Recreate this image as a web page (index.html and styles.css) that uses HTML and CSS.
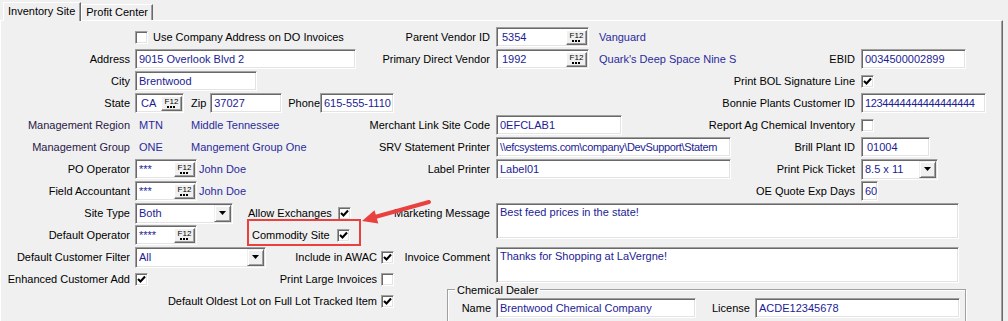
FILE: index.html
```html
<!DOCTYPE html>
<html lang="en">
<head>
  <meta charset="UTF-8">
  <meta name="viewport" content="width=device-width, initial-scale=1">
  <title>Inventory Site</title>
  <link rel="stylesheet" href="styles.css">
</head>
<body>
  <div class="window">
    <!-- Tabs -->
    <div class="tabs">
      <div class="tab active">Inventory Site</div>
      <div class="tab">Profit Center</div>
    </div>

    <!-- Panel -->
    <div class="panel">

      <!-- Left column -->
      <div class="col-left">
        <div class="row">
          <div class="lbl"></div>
          <span class="chk"></span>
          <span class="chk-text">Use Company Address on DO Invoices</span>
        </div>
        <div class="row">
          <div class="lbl">Address</div>
          <div class="box w-address"><span class="txt">9015 Overlook Blvd 2</span></div>
        </div>
        <div class="row">
          <div class="lbl">City</div>
          <div class="box w-city"><span class="txt">Brentwood</span></div>
        </div>
        <div class="row">
          <div class="lbl">State</div>
          <div class="box lookup w-state"><span class="txt pad-wide">CA</span><span class="f12">F12</span></div>
          <span class="sub-lbl zip">Zip</span>
          <div class="box w-zip"><span class="txt">37027</span></div>
          <span class="sub-lbl phone">Phone</span>
          <div class="box w-phone"><span class="txt">615-555-1110</span></div>
        </div>
        <div class="row">
          <div class="lbl mgmt">Management Region</div>
          <span class="val code">MTN</span>
          <span class="val">Middle Tennessee</span>
        </div>
        <div class="row">
          <div class="lbl mgmt">Management Group</div>
          <span class="val code">ONE</span>
          <span class="val">Mangement Group One</span>
        </div>
        <div class="row">
          <div class="lbl">PO Operator</div>
          <div class="box lookup w-op"><span class="txt">***</span><span class="f12">F12</span></div>
          <span class="val op-name">John Doe</span>
        </div>
        <div class="row">
          <div class="lbl">Field Accountant</div>
          <div class="box lookup w-op"><span class="txt">***</span><span class="f12">F12</span></div>
          <span class="val op-name">John Doe</span>
        </div>
        <div class="row">
          <div class="lbl">Site Type</div>
          <div class="fld-short">
            <div class="combo w-site"><span class="txt">Both</span><span class="drop"></span></div>
          </div>
          <div class="pair fixed">
            <span>Allow Exchanges</span>
            <span class="chk"><svg viewBox="0 0 9 9"><path d="M1 4 L3.5 6.5 L8 1.5"/></svg></span>
          </div>
        </div>
        <div class="row">
          <div class="lbl">Default Operator</div>
          <div class="fld-short">
            <div class="box lookup w-op"><span class="txt">****</span><span class="f12">F12</span></div>
          </div>
          <div class="pair fixed marked">
            <span>Commodity Site</span>
            <span class="chk"><svg viewBox="0 0 9 9"><path d="M1 4 L3.5 6.5 L8 1.5"/></svg></span>
          </div>
        </div>
        <div class="row">
          <div class="lbl">Default Customer Filter</div>
          <div class="combo w-filter"><span class="txt">All</span><span class="drop"></span></div>
          <div class="pair end">
            <span>Include in AWAC</span>
            <span class="chk"><svg viewBox="0 0 9 9"><path d="M1 4 L3.5 6.5 L8 1.5"/></svg></span>
          </div>
        </div>
        <div class="row">
          <div class="lbl">Enhanced Customer Add</div>
          <span class="chk"><svg viewBox="0 0 9 9"><path d="M1 4 L3.5 6.5 L8 1.5"/></svg></span>
          <div class="pair end">
            <span>Print Large Invoices</span>
            <span class="chk"></span>
          </div>
        </div>
        <div class="row">
          <div class="pair end">
            <span>Default Oldest Lot on Full Lot Tracked Item</span>
            <span class="chk"><svg viewBox="0 0 9 9"><path d="M1 4 L3.5 6.5 L8 1.5"/></svg></span>
          </div>
        </div>
      </div>

      <div class="col-rest">
        <div class="top-rest">
          <!-- Middle column -->
          <div class="col-mid">
            <div class="row">
              <div class="lbl">Parent Vendor ID</div>
              <div class="box lookup w-vendor"><span class="txt pad-wide">5354</span><span class="f12">F12</span></div>
              <span class="val vendor-name">Vanguard</span>
            </div>
            <div class="row">
              <div class="lbl">Primary Direct Vendor</div>
              <div class="box lookup w-vendor"><span class="txt pad-wide">1992</span><span class="f12">F12</span></div>
              <span class="val vendor-name">Quark's Deep Space Nine S</span>
            </div>
            <div class="row"></div>
            <div class="row"></div>
            <div class="row">
              <div class="lbl">Merchant Link Site Code</div>
              <div class="box w-merchant"><span class="txt">0EFCLAB1</span></div>
            </div>
            <div class="row">
              <div class="lbl">SRV Statement Printer</div>
              <div class="box w-printer"><span class="txt tight">\\efcsystems.com\company\DevSupport\Statem</span></div>
            </div>
            <div class="row">
              <div class="lbl">Label Printer</div>
              <div class="box w-printer"><span class="txt">Label01</span></div>
            </div>
            <div class="row"></div>
          </div>

          <!-- Right column -->
          <div class="col-right">
            <div class="row"></div>
            <div class="row">
              <div class="lbl">EBID</div>
              <div class="box w-ebid"><span class="txt">0034500002899</span></div>
            </div>
            <div class="row">
              <div class="lbl">Print BOL Signature Line</div>
              <span class="chk"><svg viewBox="0 0 9 9"><path d="M1 4 L3.5 6.5 L8 1.5"/></svg></span>
            </div>
            <div class="row">
              <div class="lbl">Bonnie Plants Customer ID</div>
              <div class="box w-bonnie"><span class="txt tight">1234444444444444444</span></div>
            </div>
            <div class="row">
              <div class="lbl">Report Ag Chemical Inventory</div>
              <span class="chk"></span>
            </div>
            <div class="row">
              <div class="lbl">Brill Plant ID</div>
              <div class="box w-brill"><span class="txt pad-wide">01004</span></div>
            </div>
            <div class="row">
              <div class="lbl">Print Pick Ticket</div>
              <div class="combo w-pick"><span class="txt">8.5 x 11</span><span class="drop"></span></div>
            </div>
            <div class="row">
              <div class="lbl">OE Quote Exp Days</div>
              <div class="box w-days"><span class="txt">60</span></div>
            </div>
          </div>
        </div>

        <!-- Memos and chemical dealer -->
        <div class="bottom-rest">
          <div class="mrow">
            <div class="lbl">Marketing Message</div>
            <div class="memo">Best feed prices in the state!</div>
          </div>
          <div class="mrow">
            <div class="lbl">Invoice Comment</div>
            <div class="memo">Thanks for Shopping at LaVergne!</div>
          </div>
          <div class="group">
            <div class="legend">Chemical Dealer</div>
            <div class="row">
              <div class="lbl">Name</div>
              <div class="box w-name"><span class="txt">Brentwood Chemical Company</span></div>
              <span class="sub-lbl license">License</span>
              <div class="box w-license"><span class="txt">ACDE12345678</span></div>
            </div>
          </div>
        </div>
      </div>
    </div>

    <!-- Annotation arrow -->
    <svg class="arrow" viewBox="355 195 85 32">
      <line x1="429" y1="202" x2="375" y2="217"/>
      <polygon points="362,221 374.5,210.2 378.3,223.6"/>
    </svg>
  </div>
</body>
</html>
```

FILE: styles.css
```css
* {
  margin: 0;
  padding: 0;
  box-sizing: border-box;
}

html, body {
  height: 100%;
  overflow: hidden;
  background: #f0f0f0;
  font-family: "Liberation Sans", Arial, sans-serif;
  font-size: 11px;
  color: #000;
}

.window {
  position: relative;
  width: 1008px;
  height: 321px;
}

/* === TABS === */
.tabs {
  display: flex;
  align-items: flex-end;
  height: 20px;
  padding-left: 3px;
}

.tab {
  height: 16px;
  padding: 0 4px;
  line-height: 14px;
  white-space: nowrap;
  border: 1px solid #fff;
  border-right-color: #696969;
  border-bottom: 0;
  box-shadow: inset -1px 0 #a0a0a0;
}

.tab.active {
  position: relative;
  z-index: 1;
  height: 19px;
  margin-bottom: -1px;
  padding: 0 5px 0 4px;
  line-height: 16px;
  background: #f0f0f0;
}

/* === PANEL === */
.panel {
  display: flex;
  width: 1003px;
  height: 301px;
  padding-top: 5px;
  border-top: 1px solid #fff;
  border-left: 1px solid #fff;
  border-right: 1px solid #696969;
  box-shadow: inset -1px 0 #a0a0a0;
}

.row {
  display: flex;
  align-items: center;
  height: 22px;
  white-space: nowrap;
}

.lbl {
  flex: none;
  display: flex;
  justify-content: flex-end;
  white-space: nowrap;
}

.col-left {
  flex: none;
  width: 393px;
}

.col-left .lbl {
  width: 129px;
  margin-right: 5px;
}

.col-rest {
  flex: 1;
  display: flex;
  flex-direction: column;
  min-width: 0;
}

.top-rest {
  display: flex;
  height: 176px;
}

.col-mid {
  flex: none;
  width: 341px;
}

.col-mid .lbl {
  width: 96px;
  margin-right: 6px;
}

.col-right {
  flex: 1;
}

.col-right .lbl {
  width: 120px;
  margin-right: 6px;
}

.mgmt {
  color: #2a1848;
}

.val {
  color: #2b2b9c;
}

.code {
  width: 56px;
  padding-left: 4px;
}

.op-name {
  margin-left: 2px;
}

.vendor-name {
  margin-left: 10px;
}

.sub-lbl.zip {
  width: 20px;
  margin-left: 7px;
}

.sub-lbl.phone {
  width: 33px;
  margin-left: 6px;
}

.sub-lbl.license {
  width: 43px;
  margin-left: 16px;
}

/* === CONTROLS === */
.box, .combo, .memo {
  flex: none;
  display: flex;
  align-items: center;
  height: 20px;
  background: #fff;
  color: #1c1c94;
  border: 1px solid;
  border-color: #a0a0a0 #fff #fff #a0a0a0;
  box-shadow: inset 1px 1px #696969, inset -1px -1px #e3e3e3;
  overflow: hidden;
}

.txt {
  flex: 1;
  padding-left: 3px;
  overflow: hidden;
  white-space: nowrap;
}

.txt.pad-wide {
  padding-left: 5px;
}

.txt.tight {
  letter-spacing: -0.35px;
}

.lookup {
  padding-right: 1px;
}

.f12 {
  flex: none;
  display: flex;
  flex-direction: column;
  align-items: center;
  justify-content: center;
  gap: 1px;
  width: 21px;
  height: 15px;
  background: #f0f0f0;
  color: #000;
  font-size: 8px;
  line-height: 7px;
  border: 1px solid;
  border-color: #fff #696969 #696969 #fff;
  box-shadow: inset -1px -1px #a0a0a0;
}

.f12::after {
  content: "";
  width: 8px;
  height: 2px;
  margin-right: 2px;
  background: repeating-linear-gradient(90deg, #000 0 2px, transparent 2px 3px);
}

.combo {
  height: 21px;
  padding-right: 1px;
}

.drop {
  flex: none;
  display: flex;
  align-items: center;
  justify-content: center;
  width: 17px;
  height: 17px;
  background: #f0f0f0;
  border: 1px solid;
  border-color: #f0f0f0 #696969 #696969 #f0f0f0;
  box-shadow: inset 1px 1px #fff, inset -1px -1px #a0a0a0;
}

.drop::after {
  content: "";
  width: 7px;
  height: 4px;
  background: #000;
  clip-path: polygon(0 0, 100% 0, 50% 100%);
}

.chk {
  flex: none;
  display: flex;
  align-items: center;
  justify-content: center;
  width: 13px;
  height: 13px;
  background: #fff;
  border: 1px solid;
  border-color: #a0a0a0 #fff #fff #a0a0a0;
  box-shadow: inset 1px 1px #696969, inset -1px -1px #e3e3e3;
}

.chk svg {
  width: 9px;
  height: 9px;
  fill: none;
  stroke: #000;
  stroke-width: 2.1;
}

.chk-text {
  margin-left: 5px;
}

.fld-short {
  flex: none;
  width: 112px;
}

.pair {
  display: flex;
  align-items: center;
  gap: 4px;
}

.pair.fixed {
  width: 104px;
  justify-content: space-between;
  padding-left: 1px;
}

.pair.marked {
  position: relative;
  height: 22px;
  padding-left: 5px;
  padding-right: 1px;
}

.pair.marked::after {
  content: "";
  position: absolute;
  left: 0;
  top: -5px;
  right: -10px;
  bottom: 0;
  border: 2px solid #e8413f;
}

.pair.end {
  margin-left: auto;
}

/* sizes */
.w-address { width: 221px; }
.w-city { width: 122px; }
.w-state { width: 49px; }
.w-zip { width: 72px; }
.w-phone { width: 74px; }
.w-op { width: 62px; }
.w-site { width: 98px; }
.w-filter { width: 131px; }
.w-vendor { width: 93px; }
.w-merchant { width: 126px; }
.w-printer { width: 235px; }
.w-ebid { width: 105px; }
.w-bonnie { width: 125px; }
.w-brill { width: 69px; }
.w-pick { width: 77px; }
.w-days { width: 17px; }
.w-name { width: 200px; }
.w-license { width: 205px; }

/* === MEMOS === */
.bottom-rest {
  padding-top: 1px;
}

.mrow {
  display: flex;
  margin-bottom: 8px;
}

.mrow .lbl {
  width: 96px;
  margin-right: 6px;
  padding-top: 4px;
}

.memo {
  width: 463px;
  height: 36px;
  align-items: flex-start;
  padding: 2px 3px;
  line-height: 13px;
}

/* === GROUP BOX === */
.group {
  width: 519px;
  height: 40px;
  margin-top: -2px;
  margin-left: 53px;
  border: 1px solid #a0a0a0;
  box-shadow: inset 1px 1px #fff, 1px 1px #fff;
}

.legend {
  width: fit-content;
  margin: -6px 0 0 7px;
  padding: 0 2px;
  line-height: 13px;
  background: #f0f0f0;
}

.group .lbl {
  width: 43px;
  margin-right: 5px;
}

/* === ANNOTATION === */
.arrow {
  position: absolute;
  left: 355px;
  top: 195px;
  width: 85px;
  height: 32px;
}

.arrow line {
  stroke: #e8413f;
  stroke-width: 4;
  stroke-linecap: round;
}

.arrow polygon {
  fill: #e8413f;
}
```
